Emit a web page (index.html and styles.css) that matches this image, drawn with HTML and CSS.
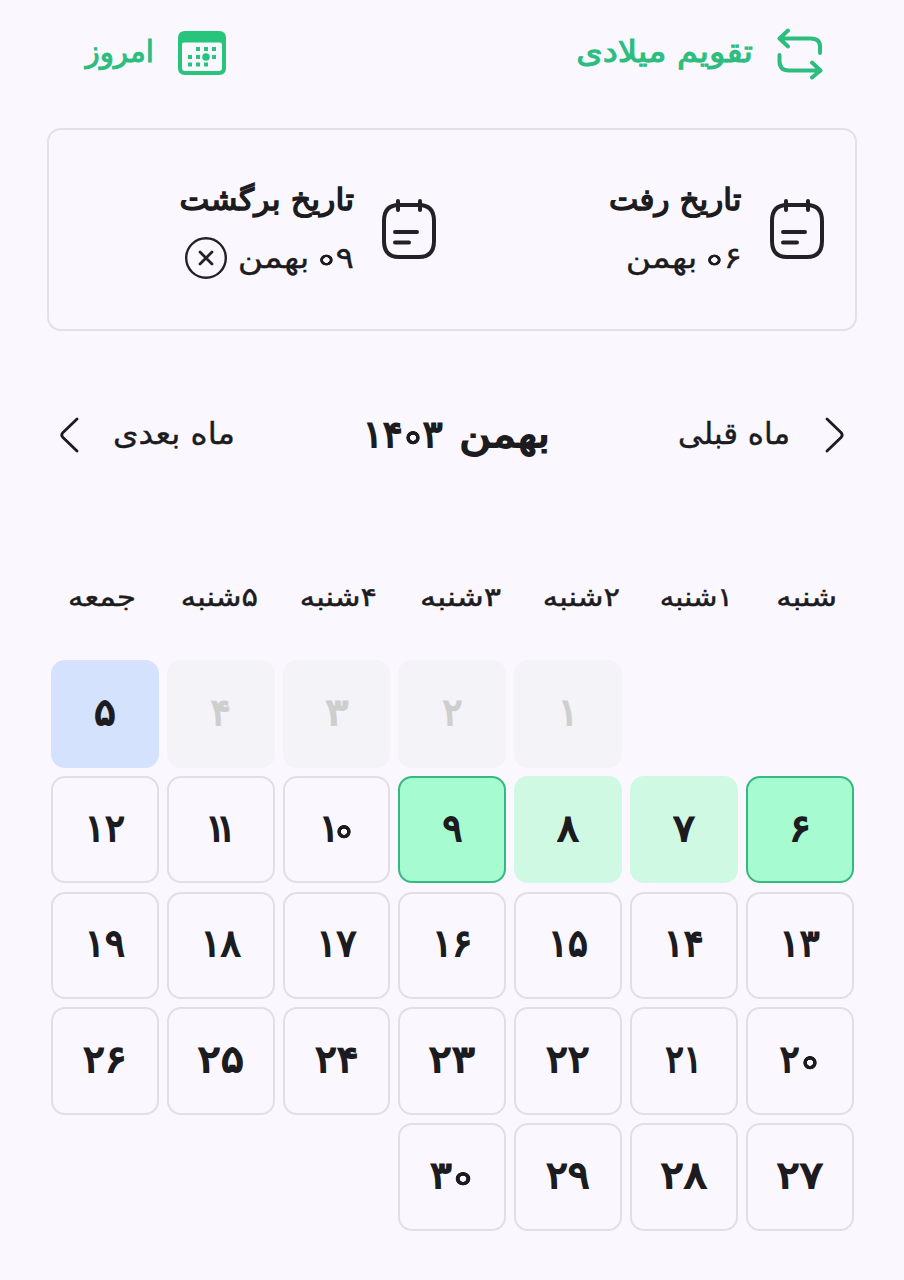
FILE: index.html
```html
<!DOCTYPE html>
<html lang="fa" dir="rtl">
<head>
<meta charset="utf-8">
<title>تقویم</title>
<link rel="stylesheet" href="styles.css">
</head>
<body>
<header class="toolbar">
  <div class="tool">
    <svg class="swap" width="46" height="52" viewBox="0 0 46 52"><path d="M11 2.500 2.500 10.500 11 18.500M3 10.500H34Q43 10.500 43 18.500V25M2.500 27V33Q2.500 42.500 12 42.500H43M35 34.500 43.500 42.500 35 49.500"/></svg>
    <span class="label t-cal">تقویم میلادی</span>
  </div>
  <div class="tool">
    <svg class="today-icon" width="48" height="44" viewBox="0 0 48 44"><path fill-rule="evenodd" d="M7 0H41Q48 0 48 7V37Q48 44 41 44H7Q0 44 0 37V7Q0 0 7 0ZM6 11.500Q4 11.500 4 13.500V37Q4 40 7 40H41Q44 40 44 37V13.500Q44 11.500 42 11.500Z"/><path d="M18 16h4v4h-4zM26 16h4v4h-4zM34 16h4v4h-4zM10 24h4v4h-4zM18 24h4v4h-4zM34 24h4v4h-4zM10 31.500h4v4h-4zM18 31.500h4v4h-4zM26 31.500h4v4h-4z"/><circle cx="28" cy="26" r="3.800"/></svg>
    <span class="label t-today">امروز</span>
  </div>
</header>

<section class="trip">
  <div class="leg">
    <svg class="note" width="54" height="60" viewBox="0 0 54 60"><path d="M17 6H37Q52 6 52 22V42Q52 58 37 58H17Q2 58 2 42V22Q2 6 17 6ZM16 2V11M38 2V11M13 33H35M13 43.500H27"/></svg>
    <div class="leg-text">
      <span class="leg-title t-go">تاریخ رفت</span>
      <div class="leg-date"><span class="t-date"><i class="zero">۰</i>۶ بهمن</span></div>
    </div>
  </div>
  <div class="leg">
    <svg class="note" width="54" height="60" viewBox="0 0 54 60"><path d="M17 6H37Q52 6 52 22V42Q52 58 37 58H17Q2 58 2 42V22Q2 6 17 6ZM16 2V11M38 2V11M13 33H35M13 43.500H27"/></svg>
    <div class="leg-text">
      <span class="leg-title t-back">تاریخ برگشت</span>
      <div class="leg-date"><span class="t-date"><i class="zero">۰</i>۹ بهمن</span>
        <svg class="clear" width="42" height="42" viewBox="0 0 42 42"><circle cx="21" cy="21" r="19.800"/><path d="M15 15 27 27M27 15 15 27"/></svg>
      </div>
    </div>
  </div>
</section>

<nav class="months">
  <div class="step">
    <svg class="chevron" width="19" height="36" viewBox="0 0 19 36"><path d="M2 2 16 15.500Q18.500 18 16 20.500L2 34"/></svg>
    <span class="t-prev">ماه قبلی</span>
  </div>
  <h1 class="month"><span class="t-month">بهمن</span><span class="t-year">۱۴<i class="zero">۰</i>۳</span></h1>
  <div class="step">
    <span class="t-next">ماه بعدی</span>
    <svg class="chevron" width="19" height="36" viewBox="0 0 19 36"><path d="M17 2 3 15.500Q.5 18 3 20.500L17 34"/></svg>
  </div>
</nav>

<div class="week">
  <span class="w0">شنبه</span><span class="w1">۱شنبه</span><span class="w2">۲شنبه</span><span class="w3">۳شنبه</span><span class="w4">۴شنبه</span><span class="w5">۵شنبه</span><span class="w6">جمعه</span>
</div>

<main class="days">
  <div class="day past first"><b>۱</b></div><div class="day past"><b>۲</b></div><div class="day past"><b class="wider">۳</b></div><div class="day past"><b>۴</b></div><div class="day today"><b class="wide">۵</b></div>
  <div class="day edge"><b class="wide">۶</b></div><div class="day between"><b class="wide">۷</b></div><div class="day between"><b class="wide">۸</b></div><div class="day edge"><b>۹</b></div><div class="day"><b>۱<i class="zero tight-zero">۰</i></b></div><div class="day"><b>۱<i class="tight">۱</i></b></div><div class="day"><b>۱۲</b></div>
  <div class="day"><b>۱۳</b></div><div class="day"><b>۱۴</b></div><div class="day"><b>۱۵</b></div><div class="day"><b>۱۶</b></div><div class="day"><b>۱۷</b></div><div class="day"><b>۱۸</b></div><div class="day"><b>۱۹</b></div>
  <div class="day"><b>۲<i class="zero">۰</i></b></div><div class="day"><b class="narrow">۲۱</b></div><div class="day"><b class="wide">۲۲</b></div><div class="day"><b class="wider">۲۳</b></div><div class="day"><b class="wide">۲۴</b></div><div class="day"><b class="wider">۲۵</b></div><div class="day"><b class="wide">۲۶</b></div>
  <div class="day"><b class="wider">۲۷</b></div><div class="day"><b class="wider">۲۸</b></div><div class="day"><b class="wide">۲۹</b></div><div class="day"><b class="wide">۳<i class="zero">۰</i></b></div>
</main>
</body>
</html>
```
FILE: styles.css
```css
* { box-sizing: border-box; }
body {
  margin: 0;
  width: 904px;
  height: 1280px;
  overflow: hidden;
  background: #faf8fe;
  color: #1c1b20;
  font-family: "DejaVu Sans", sans-serif;
  white-space: nowrap;
}
svg { display: block; flex: none; fill: none; stroke-linecap: round; stroke-linejoin: round; }
span { display: block; transform-origin: right center; }

/* ring-shaped Persian zero */
.zero {
  --ring: .075em;
  font-style: normal;
  -webkit-text-fill-color: transparent;
  -webkit-text-stroke: 0;
  background: radial-gradient(circle at 50% .668em, transparent var(--ring), currentColor calc(var(--ring) + .5px), currentColor .17em, transparent calc(.17em + .7px)) no-repeat;
}
.t-date .zero { --ring: .085em; }

.toolbar { display: flex; justify-content: space-between; height: 128px; padding: 28px 81px 0 85px; color: #2dbd7e; }
.tool { display: flex; align-items: flex-start; gap: 24px; }
.swap { stroke: currentColor; stroke-width: 4; }
.today-icon { fill: #27c47b; margin-top: 3px; }
.label { font-size: 30px; line-height: 48px; -webkit-text-stroke: 1px currentColor; }
.t-cal { width: 176px; transform: scaleX(1.128); }
.t-today { width: 69px; transform: scaleX(.98); }

.trip { display: flex; margin: 0 47px; height: 203px; padding: 69px 31px 0; border: 2.500px solid #e3e1e7; border-radius: 14px; }
.leg { display: flex; flex: none; gap: 28px; width: 388px; }
.note { stroke: #222125; stroke-width: 4; }
.leg-text { margin-top: -25px; }
.leg-title { font-size: 30px; line-height: 52px; -webkit-text-stroke: 1.4px currentColor; }
.t-go { transform: scaleX(1.04); }
.t-back { width: 165px; transform: scaleX(1.06); }
.leg-date { display: flex; align-items: center; gap: 10px; height: 64px; font-size: 30px; line-height: 62px; }
.clear { stroke: #222125; stroke-width: 2.4; }
.clear path { stroke-width: 2.800; }
.t-date { width: 117px; word-spacing: -3px; transform: scaleX(1.15); -webkit-text-stroke: .3px currentColor; }

.months { display: flex; justify-content: space-between; align-items: center; height: 60px; margin: 74px 60px 0; }
.step { display: flex; align-items: center; gap: 35px; }
.chevron { stroke: #1c1b20; stroke-width: 2.8; }
.step span { font-size: 30px; line-height: 58px; margin-bottom: 2px; -webkit-text-stroke: .4px currentColor; }
.t-prev { width: 111px; transform: scaleX(1.03); }
.t-next { width: 121px; transform: scaleX(1.085); }
.month { display: flex; gap: 18px; margin: 0; font-size: 37px; line-height: 60px; font-weight: 400; -webkit-text-stroke: 1.8px currentColor; }
.t-month { width: 89px; transform: scaleX(1.18); }
.t-year { width: 78px; }

.week { display: flex; justify-content: space-between; margin: 103px 67px 0 69px; height: 92px; font-size: 26px; line-height: 58px; -webkit-text-stroke: .5px currentColor; }
.week span { transform: scaleX(1.18); }
.w0 { width: 61px; }
.w1 { width: 71px; }
.w2 { width: 76px; }
.w3 { width: 81px; }
.w4 { width: 77px; }
.w5 { width: 79px; }
.w6 { width: 67px; }
.week .w1 { transform: scaleX(1.12); }
.week .w3 { transform: scaleX(1.24); }

.days { display: grid; grid-template-columns: repeat(7, 107.7px); grid-auto-rows: 107.7px; gap: 8.1px; margin: 0 50.500px; }
.day { display: flex; align-items: center; justify-content: center; padding-bottom: 3px; border: 2.500px solid #e1dfe4; border-radius: 14px; font-size: 37px; }
.day b { font-weight: 400; -webkit-text-stroke: 1.8px currentColor; }
.day .zero { -webkit-text-stroke: 0; }
.day .wide { transform: scaleX(1.1); }
.day .wider { transform: scaleX(1.17); }
.day .narrow { transform: scaleX(.92); }
.tight { font-style: normal; margin-left: -9px; }
.tight-zero { margin-left: -5px; }
.first { grid-column-start: 3; }
.past { background: #f4f3f7; border-color: transparent; color: #cdcfcf; }
.today { background: #d5e2fe; border-color: transparent; }
.between { background: #d0f9e4; border-color: transparent; }
.edge { background: #a7fbd0; border-color: #36b981; }
```
